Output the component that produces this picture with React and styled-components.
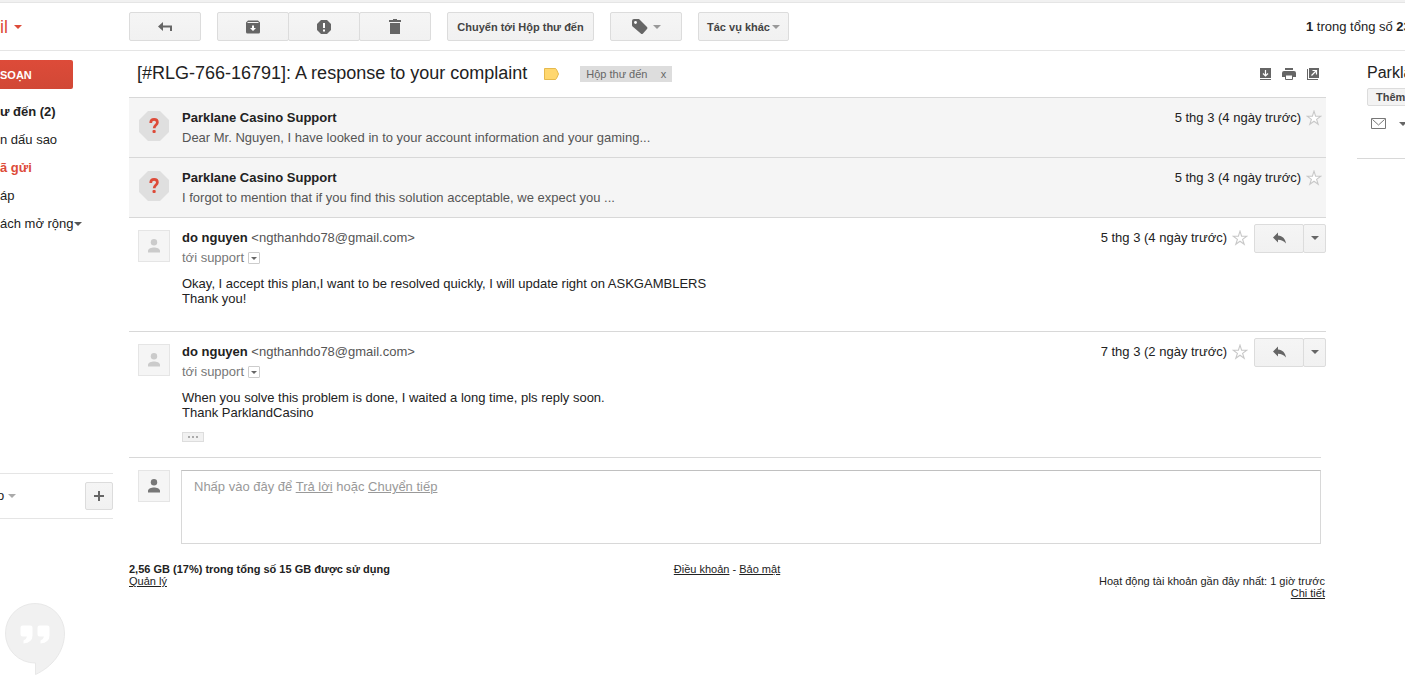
import styled, { createGlobalStyle, css } from 'styled-components';

const navItems = [
  { text: 'ư đến (2)', bold: true },
  { text: 'n dấu sao' },
  { text: 'ã gửi', bold: true, active: true },
  { text: 'áp' },
  { text: 'ách mở rộng', more: true },
];

const collapsed = [
  {
    sender: 'Parklane Casino Support',
    snippet: 'Dear Mr. Nguyen, I have looked in to your account information and your gaming...',
    date: '5 thg 3 (4 ngày trước)',
  },
  {
    sender: 'Parklane Casino Support',
    snippet: 'I forgot to mention that if you find this solution acceptable, we expect you ...',
    date: '5 thg 3 (4 ngày trước)',
  },
];

const opened = [
  {
    date: '5 thg 3 (4 ngày trước)',
    lines: ['Okay, I accept this plan,I want to be resolved quickly, I will update right on ASKGAMBLERS', 'Thank you!'],
  },
  {
    date: '7 thg 3 (2 ngày trước)',
    lines: ['When you solve this problem is done, I waited a long time, pls reply soon.', 'Thank ParklandCasino'],
    trimmed: true,
  },
];

const Star = () => (
  <StarButton aria-label="Gắn dấu sao">
    <svg width="16" height="16" viewBox="0 0 16 16" fill="#fff" stroke="#c8c8c8" strokeWidth="1.1">
      <path d="M8 1.2l1.6 5 5.200.1-4.200 3.100 1.600 4.900L8 11.300l-4.200 3 1.600-4.900L1.200 6.300l5.200-.1z" />
    </svg>
  </StarButton>
);

const Person = ({ color }) => (
  <Avatar>
    <svg width="14" height="14" viewBox="0 0 14 14" fill={color}>
      <circle cx="7" cy="3.300" r="3.200" />
      <path d="M1 13.500v-1.700C1 9.700 4.500 8.500 7 8.500s6 1.200 6 3.300v1.700z" />
    </svg>
  </Avatar>
);

const UnknownSender = () => (
  <svg width="30" height="30" viewBox="0 0 30 30">
    <path d="M9 0h12l9 9v12l-9 9H9l-9-9V9z" fill="#dfdfdf" />
    <path d="M11.700 12c0-2.400 1.300-3.700 3.400-3.700s3.300 1.200 3.300 3.100c0 2.700-3.200 2.600-3.200 5.800" fill="none" stroke="#dd4b39" strokeWidth="2.700" />
    <rect x="13.500" y="19" width="3.200" height="3" rx="1" fill="#dd4b39" />
  </svg>
);

const CollapsedMessage = ({ message }) => (
  <CollapsedRow>
    <UnknownSender />
    <MessageMain>
      <Sender>{message.sender}</Sender>
      <Snippet>{message.snippet}</Snippet>
    </MessageMain>
    <MessageMeta>
      {message.date}
      <Star />
    </MessageMeta>
  </CollapsedRow>
);

const OpenMessage = ({ message }) => (
  <OpenRow $last={message.trimmed}>
    <Person color="#cbcbcb" />
    <MessageMain>
      <div>
        <Sender>do nguyen</Sender> <Address>&lt;ngthanhdo78@gmail.com&gt;</Address>
      </div>
      <Recipient>
        tới support
        <DetailsButton aria-label="Hiển thị chi tiết"><Caret $color="#666" $size={3} /></DetailsButton>
      </Recipient>
      <MessageBody>
        {message.lines.map(line => <div key={line}>{line}</div>)}
      </MessageBody>
      {message.trimmed && (
        <TrimmedButton aria-label="Hiển thị nội dung bị cắt"><i /><i /><i /></TrimmedButton>
      )}
    </MessageMain>
    <MessageMeta>
      {message.date}
      <Star />
      <ReplyGroup>
        <ToolButton $width={50} aria-label="Trả lời">
          <svg width="13" height="12" viewBox="0 0 13 12" fill="#666">
            <path d="M0 5.500L5 .5v3c4.500.5 7.300 3 8 8C10.500 8.800 8.500 8 5 7.800v2.700z" />
          </svg>
        </ToolButton>
        <ToolButton $width={23} aria-label="Khác"><Caret $color="#666" /></ToolButton>
      </ReplyGroup>
    </MessageMeta>
  </OpenRow>
);

const App = () => (
  <>
    <GlobalStyle />
    <Page>
      <TopStrip />
      <Header>
        <Product>il <Caret $color="#dd4b39" /></Product>
        <Toolbar>
          <ToolButton $width={72} aria-label="Quay lại">
            <svg width="14" height="10" viewBox="0 0 14 10" fill="#666">
              <path d="M0 4.500L5 0v3.500h9V9h-2V5.500H5V9z" />
            </svg>
          </ToolButton>
          <ButtonGroup>
            <ToolButton $width={72} aria-label="Lưu trữ">
              <svg width="14" height="14" viewBox="0 0 14 14">
                <path d="M2 .5h10l2 2V12a1.500 1.500 0 0 1-1.500 1.500h-11A1.500 1.500 0 0 1 0 12V2.500z" fill="#666" />
                <path d="M1.500 2.500h11" stroke="#f3f3f3" />
                <path d="M6 5.500h2V8h2l-3 3-3-3h2z" fill="#fff" />
              </svg>
            </ToolButton>
            <ToolButton $width={72} aria-label="Báo cáo spam">
              <svg width="14" height="14" viewBox="0 0 14 14">
                <path d="M4 0h6l4 4v6l-4 4H4l-4-4V4z" fill="#666" />
                <path d="M6 3h2v5H6zM6 9.500h2v2H6z" fill="#fff" />
              </svg>
            </ToolButton>
            <ToolButton $width={72} aria-label="Xóa">
              <svg width="12" height="15" viewBox="0 0 12 15" fill="#666">
                <path d="M4 0h4v1h4v2H0V1h4zM1 4h10v11H1z" />
              </svg>
            </ToolButton>
          </ButtonGroup>
          <ToolButton $width={147}>Chuyển tới Hộp thư đến</ToolButton>
          <ToolButton $width={72} aria-label="Nhãn">
            <svg width="16" height="16" viewBox="0 0 16 16">
              <path d="M0 2a2 2 0 0 1 2-2h5l8 8q1 1 0 2L11 14.500q-1.200 1-2.200 0L.6 7.500Q0 7 0 6z" fill="#666" />
              <circle cx="3.500" cy="3.500" r="1.400" fill="#fff" />
            </svg>
            <Caret $color="#999" />
          </ToolButton>
          <ToolButton $width={91} $tight>Tác vụ khác <Caret $color="#999" /></ToolButton>
        </Toolbar>
        <Counter><b>1</b> trong tổng số <b>23</b></Counter>
      </Header>

      <Columns>
        <Sidebar>
          <Compose>SOẠN</Compose>
          <Nav>
            {navItems.map(item => (
              <NavLink key={item.text} href="#" $bold={item.bold} $active={item.active}>
                {item.text}
                {item.more && <Caret $color="#555" />}
              </NavLink>
            ))}
          </Nav>
          <ChatBar>
            <ChatUser>o <Caret $color="#aaa" /></ChatUser>
            <ToolButton $width={28} $small aria-label="Cuộc trò chuyện mới">
              <svg width="12" height="12" viewBox="0 0 12 12" fill="#666"><path d="M5 1h2v4h4v2H7v4H5V7H1V5h4z" /></svg>
            </ToolButton>
          </ChatBar>
          <Hangouts width="60" height="73" viewBox="0 0 60 73">
            <path d="M30 .5A29.500 29.500 0 0 0 .5 30 29.500 29.500 0 0 0 30.500 60v11.500C47 64 59.500 49 59.500 30A29.500 29.500 0 0 0 30 .5z" fill="#f1f1f1" stroke="#e8e8e8" />
            <path d="M17.500 22.500h8q2 0 2 2v8q0 7-9 8v-3q3-1 3.500-4h-4.500q-2 0-2-2v-7q0-2 2-2zM34.500 22.500h8q2 0 2 2v8q0 7-9 8v-3q3-1 3.500-4h-4.500q-2 0-2-2v-7q0-2 2-2z" fill="#fff" />
          </Hangouts>
        </Sidebar>

        <Main>
          <SubjectRow>
            <Subject>[#RLG-766-16791]: A response to your complaint</Subject>
            <svg width="15" height="12" viewBox="0 0 15 12">
              <path d="M.5.5h10.500q1 0 1.500 1l2 4.500-2 4.500q-.5 1-1.500 1H.5z" fill="#ffd76e" stroke="#e5b94e" />
            </svg>
            <LabelChip>Hộp thư đến <ChipClose aria-label="Xóa nhãn">x</ChipClose></LabelChip>
            <SubjectActions>
              <IconButton aria-label="Thu gọn">
                <svg width="11" height="12" viewBox="0 0 11 12">
                  <path d="M0 0h11v10H0zM0 11h11v1H0z" fill="#666" />
                  <path d="M5.500 2v6M3 5.500L5.500 8 8 5.500" fill="none" stroke="#fff" strokeWidth="1.200" />
                </svg>
              </IconButton>
              <IconButton aria-label="In">
                <svg width="14" height="12" viewBox="0 0 14 12" fill="#666">
                  <path d="M3 0h8v2H3zM2 3h10q2 0 2 2v4h-3V7H3v2H0V5q0-2 2-2z" />
                  <path d="M3.500 7h7v4.500h-7z" fill="#fff" stroke="#666" />
                </svg>
              </IconButton>
              <IconButton aria-label="Trong cửa sổ mới">
                <svg width="12" height="12" viewBox="0 0 12 12">
                  <path d="M2 0h10v10H2zM0 1h1v10h10v1H0z" fill="#666" />
                  <path d="M4.500 7.500l5-5M5.500 2.500h4v4" fill="none" stroke="#fff" strokeWidth="1.200" />
                </svg>
              </IconButton>
            </SubjectActions>
          </SubjectRow>

          {collapsed.map((message, i) => <CollapsedMessage key={i} message={message} />)}
          {opened.map(message => <OpenMessage key={message.date} message={message} />)}

          <ReplyRow>
            <Person color="#777" />
            <ReplyBox>
              Nhấp vào đây để <a href="#">Trả lời</a> hoặc <a href="#">Chuyển tiếp</a>
            </ReplyBox>
          </ReplyRow>

          <Footer>
            <div>
              <b>2,56 GB (17%) trong tổng số 15 GB được sử dụng</b><br />
              <a href="#">Quản lý</a>
            </div>
            <div><a href="#">Điều khoản</a> - <a href="#">Bảo mật</a></div>
            <Activity>
              Hoạt động tài khoản gần đây nhất: 1 giờ trước<br />
              <a href="#">Chi tiết</a>
            </Activity>
          </Footer>
        </Main>

        <People>
          <PersonName>Parkla</PersonName>
          <AddButton>Thêm</AddButton>
          <PersonActions>
            <IconButton aria-label="Gửi email">
              <svg width="15" height="11" viewBox="0 0 15 11" fill="none" stroke="#777">
                <path d="M.5.5h14v10H.5zM1.500 1.500l6 5.500 6-5.500" />
              </svg>
            </IconButton>
            <Caret $color="#666" />
          </PersonActions>
        </People>
      </Columns>
    </Page>
  </>
);

export default App;

const GlobalStyle = createGlobalStyle`
  * {
    box-sizing: border-box;
  }

  body {
    margin: 0;
    background: #fff;
    color: #222;
    font: 13px/20px "Liberation Sans", Arial, sans-serif;
  }

  button {
    padding: 0;
    border: 0;
    background: none;
    font: inherit;
    color: inherit;
    cursor: pointer;
  }

  a {
    color: inherit;
  }

  svg {
    display: block;
    flex: none;
  }
`

const Page = styled.div`
  overflow: hidden;
`

const TopStrip = styled.div`
  height: 3px;
  background: #f1f1f1;
  border-bottom: 1px solid #e5e5e5;
`

const Caret = styled.span`
  flex: none;
  width: 0;
  border: ${({ $size = 4 }) => $size}px solid transparent;
  border-top-color: ${({ $color }) => $color};
  border-bottom: 0;
`

const Header = styled.header`
  display: flex;
  align-items: center;
  height: 48px;
  border-bottom: 1px solid #e5e5e5;
  white-space: nowrap;
`

const Product = styled.div`
  display: flex;
  align-items: center;
  gap: 6px;
  width: 129px;
  color: #dd4b39;
  font-size: 18px;
`

const Toolbar = styled.div`
  display: flex;
  flex: 1;
  gap: 16px;
`

const ToolButton = styled.button`
  display: flex;
  align-items: center;
  justify-content: center;
  gap: ${({ $tight }) => ($tight ? 2 : 5)}px;
  width: ${({ $width }) => $width}px;
  height: ${({ $small }) => ($small ? 28 : 29)}px;
  border: 1px solid #dcdcdc;
  border-radius: 2px;
  background: linear-gradient(#f5f5f5, #f1f1f1);
  color: #444;
  font-size: 11px;
  font-weight: bold;
  white-space: nowrap;
`

const ButtonGroup = styled.div`
  display: flex;

  button + button {
    margin-left: -1px;
  }
`

const ReplyGroup = styled(ButtonGroup)`
  margin-left: 6px;
`

const Counter = styled.div`
  width: 99px;
`

const Columns = styled.div`
  display: flex;
  align-items: flex-start;
`

const Sidebar = styled.aside`
  flex: none;
  width: 113px;
  margin-right: 16px;
  padding-top: 9px;
`

const Compose = styled.button`
  display: block;
  width: 73px;
  height: 29px;
  border-radius: 0 2px 2px 0;
  background: linear-gradient(#dd4b39, #d14836);
  color: #fff;
  font-size: 11px;
  font-weight: bold;
  text-align: left;
`

const Nav = styled.nav`
  padding-top: 9px;
`

const NavLink = styled.a`
  display: flex;
  align-items: center;
  height: 28px;
  color: ${({ $active }) => ($active ? '#dd4b39' : '#222')};
  text-decoration: none;
  white-space: nowrap;
  ${({ $bold }) => $bold && css`font-weight: bold;`}
`

const ChatBar = styled.div`
  display: flex;
  align-items: center;
  justify-content: space-between;
  height: 46px;
  margin-top: 235px;
  border-top: 1px solid #e5e5e5;
  border-bottom: 1px solid #e5e5e5;
`

const ChatUser = styled.button`
  display: flex;
  align-items: center;
  gap: 4px;
  margin-left: -3px;
`

const Hangouts = styled.svg`
  margin: 84px 0 0 5px;
`

const Main = styled.main`
  flex: 1;
  min-width: 0;
`

const SubjectRow = styled.div`
  display: flex;
  align-items: center;
  height: 46px;
  padding: 0 7px 0 8px;
`

const Subject = styled.h1`
  margin: 0 17px 2px 0;
  font-size: 18px;
  font-weight: normal;
  white-space: nowrap;
`

const LabelChip = styled.span`
  display: flex;
  justify-content: space-between;
  width: 92px;
  height: 16px;
  margin-left: 21px;
  padding: 0 6px;
  background: #ddd;
  color: #666;
  font-size: 11px;
  line-height: 16px;
  white-space: nowrap;
`

const ChipClose = styled.button`
  line-height: 16px;
`

const SubjectActions = styled.div`
  display: flex;
  gap: 11px;
  margin-left: auto;
`

const IconButton = styled.button`
  display: block;
`

const Row = styled.article`
  display: flex;
  align-items: flex-start;
  border-top: 1px solid #d8d8d8;
`

const CollapsedRow = styled(Row)`
  gap: 13px;
  height: 60px;
  padding: 10px 4px 0 10px;
  background: #f5f5f5;

  > svg {
    margin-top: 3px;
  }
`

const OpenRow = styled(Row)`
  gap: 12px;
  min-height: 114px;
  padding: 10px 0 ${({ $last }) => ($last ? 15 : 10)}px 9px;
`

const Avatar = styled.div`
  display: flex;
  flex: none;
  align-items: center;
  justify-content: center;
  width: 32px;
  height: 32px;
  border: 1px solid #e5e5e5;
  background: #f5f5f5;

  article & {
    margin-top: 2px;
  }
`

const MessageMain = styled.div`
  flex: 1;
  min-width: 0;
`

const Sender = styled.span`
  font-weight: bold;
`

const Address = styled.span`
  color: #555;
`

const Snippet = styled.div`
  color: #555;
`

const Recipient = styled.div`
  display: flex;
  align-items: center;
  gap: 4px;
  color: #777;
`

const DetailsButton = styled.button`
  display: grid;
  place-items: center;
  width: 12px;
  height: 12px;
  border: 1px solid #ccc;
  border-radius: 1px;
`

const MessageBody = styled.div`
  padding-top: 8px;
  line-height: 15px;
`

const TrimmedButton = styled.button`
  display: flex;
  align-items: center;
  justify-content: center;
  gap: 2px;
  width: 22px;
  height: 10px;
  margin-top: 12px;
  border: 1px solid #ddd;
  background: #f1f1f1;

  i {
    width: 2px;
    height: 2px;
    background: #aaa;
  }
`

const MessageMeta = styled.div`
  display: flex;
  align-items: center;
  height: 20px;
  white-space: nowrap;
`

const StarButton = styled.button`
  margin-left: 5px;
`

const ReplyRow = styled.div`
  display: flex;
  gap: 11px;
  margin-right: 5px;
  padding: 12px 0 0 9px;
  border-top: 1px solid #d8d8d8;
`

const ReplyBox = styled.div`
  flex: 1;
  height: 74px;
  padding: 6px 12px;
  border: 1px solid #d8d8d8;
  border-top-color: #c0c0c0;
  color: #999;
`

const Footer = styled.footer`
  display: grid;
  grid-template-columns: 1fr auto 1fr;
  padding: 19px 1px 0 0;
  font-size: 11px;
  line-height: 12px;
`

const Activity = styled.div`
  padding-top: 12px;
  text-align: right;
`

const People = styled.aside`
  flex: none;
  width: 48px;
  height: 108px;
  margin-left: 31px;
  padding: 12px 0 0 10px;
  border-bottom: 1px solid #d8d8d8;
  white-space: nowrap;
  overflow: hidden;
`

const PersonName = styled.div`
  font-size: 16px;
`

const AddButton = styled.button`
  display: block;
  width: 60px;
  height: 18px;
  margin-top: 5px;
  padding-left: 8px;
  border: 1px solid #dcdcdc;
  border-radius: 2px;
  background: #f3f3f3;
  color: #444;
  font-size: 11px;
  font-weight: bold;
  line-height: 16px;
  text-align: left;
`

const PersonActions = styled.div`
  display: flex;
  align-items: center;
  gap: 13px;
  padding: 12px 0 0 4px;
`
